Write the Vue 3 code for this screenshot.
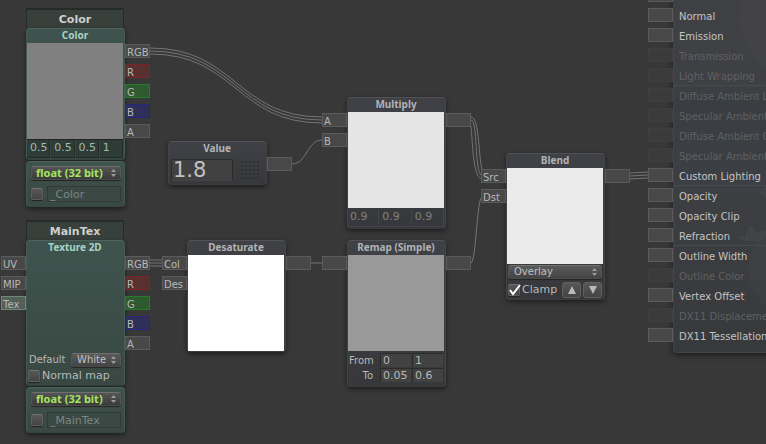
<script setup>
import { reactive } from 'vue'

const channels = [
  { label: 'RGB' },
  { label: 'R', tone: 'red' },
  { label: 'G', tone: 'green' },
  { label: 'B', tone: 'blue' },
  { label: 'A' },
]

const properties = reactive([
  { id: 'color', name: 'Color', type: 'Color', x: 26, y: 8, swatch: '#808080', values: ['0.5', '0.5', '0.5', '1'], variable: '_Color', inputs: [] },
  {
    id: 'maintex', name: 'MainTex', type: 'Texture 2D', x: 26, y: 220, variable: '_MainTex',
    inputs: [{ label: 'UV' }, { label: 'MIP' }, { label: 'Tex', tone: 'light' }],
  },
])

const nodes = reactive([
  { id: 'value', title: 'Value', x: 168, y: 141, inputs: [], number: '1.8' },
  { id: 'desaturate', title: 'Desaturate', x: 187, y: 240, swatch: '#ffffff', inputs: ['Col', 'Des'] },
  { id: 'multiply', title: 'Multiply', x: 347, y: 97, swatch: '#e5e5e5', inputs: ['A', 'B'], results: ['0.9', '0.9', '0.9'] },
  { id: 'remap', title: 'Remap (Simple)', x: 347, y: 240, swatch: '#999999', inputs: [''], ranges: [
    { label: 'From', values: ['0', '1'] },
    { label: 'To', values: ['0.05', '0.6'] },
  ] },
  { id: 'blend', title: 'Blend', x: 506, y: 153, swatch: '#ebebeb', inputs: ['Src', 'Dst'], blend: true },
])

const outputs = [
  { label: '' },
  { label: 'Normal' },
  { label: 'Emission' },
  { label: 'Transmission', off: true },
  { label: 'Light Wrapping', off: true, line: true },
  { label: 'Diffuse Ambient Light', off: true },
  { label: 'Specular Ambient Light', off: true },
  { label: 'Diffuse Ambient Occlusion', off: true },
  { label: 'Specular Ambient Occlusion', off: true },
  { label: 'Custom Lighting', line: true },
  { label: 'Opacity' },
  { label: 'Opacity Clip' },
  { label: 'Refraction', line: true },
  { label: 'Outline Width' },
  { label: 'Outline Color', off: true },
  { label: 'Vertex Offset' },
  { label: 'DX11 Displacement', off: true },
  { label: 'DX11 Tessellation' },
]

const wires = [
  'M150 48C236 48 236 117 322 117',
  'M150 51C236 51 236 120 322 120',
  'M150 54C236 54 236 123 322 123',
  'M292 164C307 164 307 140 322 140',
  'M150 260H162', 'M150 263H162', 'M150 266H162',
  'M311 263H322',
  'M471 117C480 117 478 160 483 173',
  'M471 120C478 120 474 172 482 176',
  'M470 123C473 127 471 178 482 179',
  'M471 263C476 263 477 197 482 197',
  'M630 173L648 172', 'M630 176L648 175', 'M630 179L648 178',
]

const place = (item) => ({ left: item.x + 'px', top: item.y + 'px' })
</script>

<template>
  <main class="canvas">
    <svg class="wires" aria-hidden="true">
      <path v-for="d in wires" :key="d" :d="d" />
    </svg>

    <section v-for="p in properties" :key="p.id" class="property" :style="place(p)">
      <h2 class="tab">{{ p.name }}</h2>
      <div class="node green" :class="{ tall: !p.swatch }">
        <ul class="ports left">
          <li v-for="i in p.inputs" :key="i.label" class="port" :class="i.tone">{{ i.label }}</li>
        </ul>
        <ul class="ports right">
          <li v-for="c in channels" :key="c.label" class="port" :class="c.tone">{{ c.label }}</li>
        </ul>
        <h3 class="title">{{ p.type }}</h3>
        <template v-if="p.swatch">
          <div class="preview" :style="{ background: p.swatch }"></div>
          <div class="fields">
            <input v-for="(v, i) in p.values" :key="i" v-model="p.values[i]" class="cell" :aria-label="'Component ' + (i + 1)" />
          </div>
        </template>
        <div v-else class="texture">
          <div class="row">
            <label class="small" for="default-texture">Default</label>
            <span class="popup">
              <select id="default-texture"><option>White</option></select>
              <svg viewBox="0 0 5 8"><path d="M0 3L2.500 0L5 3ZM0 5L2.500 8L5 5Z" /></svg>
            </span>
          </div>
          <label class="row check-row"><input type="checkbox" class="box" />Normal map</label>
        </div>
      </div>
      <div class="node green settings">
        <span class="popup precision">
          <select aria-label="Precision"><option>float (32 bit)</option></select>
          <svg viewBox="0 0 5 8"><path d="M0 3L2.500 0L5 3ZM0 5L2.500 8L5 5Z" /></svg>
        </span>
        <div class="row variable">
          <input type="checkbox" class="box" aria-label="Custom variable name" />
          <input v-model="p.variable" class="name" aria-label="Variable name" />
        </div>
      </div>
    </section>

    <section v-for="n in nodes" :key="n.id" class="node placed" :style="place(n)">
      <ul class="ports left">
        <li v-for="i in n.inputs" :key="i" class="port">{{ i }}</li>
      </ul>
      <ul class="ports right"><li class="port"></li></ul>
      <h3 class="title">{{ n.title }}</h3>
      <div v-if="n.swatch" class="preview" :style="{ background: n.swatch }"></div>

      <div v-if="n.number" class="value">
        <input v-model="n.number" class="big" aria-label="Value" />
        <span class="grip"></span>
      </div>

      <div v-if="n.results" class="fields dim">
        <input v-for="(r, i) in n.results" :key="i" :value="r" readonly class="cell" :aria-label="'Result ' + (i + 1)" />
      </div>

      <div v-if="n.ranges" class="ranges">
        <div v-for="r in n.ranges" :key="r.label" class="range">
          <label class="small" :for="r.label + '-min'">{{ r.label }}</label>
          <input :id="r.label + '-min'" v-model="r.values[0]" class="cell" />
          <input v-model="r.values[1]" class="cell" :aria-label="r.label + ' max'" />
        </div>
      </div>

      <div v-if="n.blend" class="blend">
        <span class="popup">
          <select aria-label="Blend mode"><option>Overlay</option></select>
          <svg viewBox="0 0 5 8"><path d="M0 3L2.500 0L5 3ZM0 5L2.500 8L5 5Z" /></svg>
        </span>
        <div class="row clamp">
          <label class="row">
            <span class="ticked">
              <input type="checkbox" class="box" checked />
              <svg viewBox="0 0 14 14"><path d="M2 7L5 11L12 2" /></svg>
            </span>Clamp
          </label>
          <button type="button" aria-label="Move up"><svg viewBox="0 0 8 8"><path d="M4 0L8 8H0Z" /></svg></button>
          <button type="button" aria-label="Move down"><svg viewBox="0 0 8 8"><path d="M0 0H8L4 8Z" /></svg></button>
        </div>
      </div>
    </section>

    <section class="master">
      <svg class="art" viewBox="0 0 100 366" aria-hidden="true">
        <circle class="orb" cx="126" cy="33" r="60" />
        <g class="petals">
          <path d="M84 207Q89 200 100 201V213Q90 213 84 207Z" />
          <path d="M72 256Q70 244 77 240Q81 246 82 249Q87 244 94 245Q92 252 88 256Z" />
          <path d="M64 254Q67 249 72 251L76 256Z" />
        </g>
        <circle class="orb" cx="122" cy="284" r="48" />
      </svg>
      <ul>
        <li v-for="(o, i) in outputs" :key="i" :class="{ off: o.off, line: o.line }">
          <span class="port"></span>{{ o.label }}
        </li>
      </ul>
    </section>
  </main>
</template>

<style>
body { margin: 0; background: #383838; }
</style>

<style scoped>
* { box-sizing: border-box; }
.canvas {
  position: relative;
  min-height: 100vh;
  overflow: hidden;
  background: #383838;
  color: #b8b8b8;
  font: 10px/14px "DejaVu Sans", sans-serif;
}
ul { margin: 0; padding: 0; list-style: none; }
input, select, button { appearance: none; margin: 0; padding: 0; border: 0; border-radius: 0; font: inherit; color: inherit; background: none; min-width: 0; outline: 0; }
.wires { position: absolute; inset: 0; width: 100%; height: 100%; fill: none; stroke: #747474; stroke-width: 1; }
.property, .placed, .master { position: absolute; }
.property { width: 99px; }
.node {
  position: relative;
  width: 99px;
  padding-right: 1px;
  border: 1px solid #48494c;
  border-color: #505255 #434446 #3b3c3e;
  border-radius: 4px;
  background: linear-gradient(#3f4146, #37383b);
  box-shadow: 0 2px 5px rgba(0, 0, 0, .5);
}
.placed { position: absolute; }
.green { border-color: #4c655e #435a53 #364842; background: linear-gradient(#3f534e, #394842); }
.tall { height: 146px; display: flex; flex-direction: column; }
.tab {
  width: 98px;
  height: 20px;
  margin: 0;
  border: 1px solid #252b28;
  border-top-width: 2px;
  border-bottom: 0;
  background: #38403b;
  color: #cfcfcf;
  font: bold 11px/19px "DejaVu Sans", sans-serif;
  text-align: center;
}
.title { height: 14px; margin: 0; color: #b2b3b5; font: bold 10px/12px "Noto Sans", sans-serif; text-align: center; }
.green .title { color: #a7d3c3; }
.preview { height: 96px; }
.ports { position: absolute; top: 15px; display: grid; gap: 6px; }
.left { left: -26px; }
.right { right: -26px; }
.port { width: 25px; height: 14px; padding-left: 1px; border: 1px solid #5b5b5b; background: #484848; line-height: 15px; white-space: nowrap; }
.port.red { border-color: #7b2626; background: #592f2f; }
.port.green { border-color: #267b26; background: #2f592f; }
.port.blue { border-color: #26267b; background: #2f2f59; }
.port.light { border-color: #71857c; background: #536059; }
.fields { display: flex; gap: 1px; height: 20px; border-top: 1px solid #202522; }
.cell { flex: 1; width: 0; padding-left: 3px; border: 1px solid rgba(0, 0, 0, .25); border-width: 0 1px 1px 0; background: rgba(0, 0, 0, .18); font-size: 11px; }
.fields .cell { height: 18px; padding-left: 3px; padding-bottom: 2px; color: #9dbbb0; }
.fields.dim { border-color: transparent; }
.fields.dim .cell { padding-left: 2px; color: #808080; border-color: #434448; background: none; }
.row { display: flex; align-items: center; }
.popup { position: relative; display: flex; flex: 1; }
.popup select {
  width: 100%;
  height: 14px;
  padding-left: 5px;
  border: 1px solid #5e5e5e;
  border-color: #707070 #555 #4a4a4a;
  border-radius: 3px;
  background: linear-gradient(#5a5a5a, #444);
  box-shadow: 0 1px 1px #242424;
  line-height: 12px;
  color: #c0c0c0;
}
.popup svg { position: absolute; top: 3px; right: 5px; width: 5px; height: 8px; fill: #9c9c9c; pointer-events: none; }
.box { flex: none; width: 12px; height: 12px; border: 1px solid #5f5f5f; border-top-color: #727272; border-radius: 2px; background: linear-gradient(#575757, #454545); box-shadow: 0 1px 1px #222; }
.texture { display: flex; flex: 1; flex-direction: column; justify-content: flex-end; padding: 0 2px 1px 1px; }
.texture .row { justify-content: space-between; }
.texture .small { padding-left: 1px; }
.texture .popup { flex: 0 0 50px; }
.texture .check-row { justify-content: flex-start; gap: 2px; height: 17px; font-size: 11px; }
.settings { display: flex; flex-direction: column; gap: 6px; height: 46px; margin-top: 1px; padding: 4px 3px 0 4px; }
.popup.precision { flex: none; }
.popup.precision select { color: #a4e55d; font: bold 11px/12px "Noto Sans", sans-serif; background: linear-gradient(#555, #3b3b3b); padding-left: 4px; }
.variable { gap: 4px; }
.name { flex: 1; height: 16px; padding-left: 2px; border: 1px solid #303a36; background: #3b4944; color: #7a8782; font-size: 11px; }
.value { display: flex; align-items: center; height: 28px; padding: 0 6px 0 2px; gap: 7px; }
.big { width: 62px; height: 22px; padding-left: 1px; border: 1px solid #2b2b2c; border-bottom-color: #444; background: #414141; font-size: 21px; line-height: 20px; color: #c2c2c2; }
.grip { flex: 1; height: 20px; background: radial-gradient(circle, #2f3032 1px, transparent 1px) 0 0 / 4px 4px; }
.ranges { display: grid; align-content: start; gap: 1px; padding: 2px 1px 0 0; height: 35px; }
.range { display: grid; grid-template-columns: 30px 31px 31px; column-gap: 1px; justify-content: end; height: 14px; }
.range .small { padding-right: 6px; text-align: right; line-height: 16px; }
.range .small { direction: ltr; white-space: nowrap; }
.range .cell { width: 100%; height: 14px; padding-left: 2px; border: 1px solid #2a2a2b; border-width: 1px 0 0 1px; background: #424242; line-height: 13px; }
.blend { display: grid; gap: 3px; padding: 1px; height: 35px; }
.clamp { gap: 2px; height: 16px; }
.clamp label { flex: 1; gap: 2px; font-size: 11px; }
.ticked { position: relative; display: flex; }
.ticked svg { position: absolute; left: 0; top: -1px; width: 14px; height: 14px; fill: none; stroke: #fff; stroke-width: 2; pointer-events: none; }
.ticked .box:not(:checked) + svg { display: none; }
button { display: flex; align-items: center; justify-content: center; width: 19px; height: 16px; border: 1px solid #606060; border-radius: 3px; background: linear-gradient(#585858, #434343); }
button svg { width: 8px; height: 8px; fill: #b9b9b9; }
.master {
  top: -16px;
  left: 673px;
  right: -60px;
  border: 1px solid #434548;
  border-radius: 4px;
  background: linear-gradient(#404145, #3f4044 27%, #3a3e42 31%, #3c3f43 55%, #3c3d40 70%, #38393b);
  box-shadow: 0 2px 6px rgba(0, 0, 0, .55);
}
.master ul { position: relative; padding-bottom: 7px; }
.master li { display: flex; align-items: flex-start; height: 20px; padding-left: 5px; color: #c4c4c4; white-space: nowrap; line-height: 24px; }
.master li .port { flex: none; margin: 3px 6px 0 -31px; }
.master .off { color: #5f6062; }
.master .off .port { border-color: #3f3f3f; background: #3b3b3b; }
.master .line { box-shadow: 0 1px #484a4e; }
.art { position: absolute; top: 0; left: 0; width: 100px; height: 366px; }
.orb { fill: rgba(255, 255, 255, .015); }
.petals { fill: rgba(255, 255, 255, .03); }
</style>
